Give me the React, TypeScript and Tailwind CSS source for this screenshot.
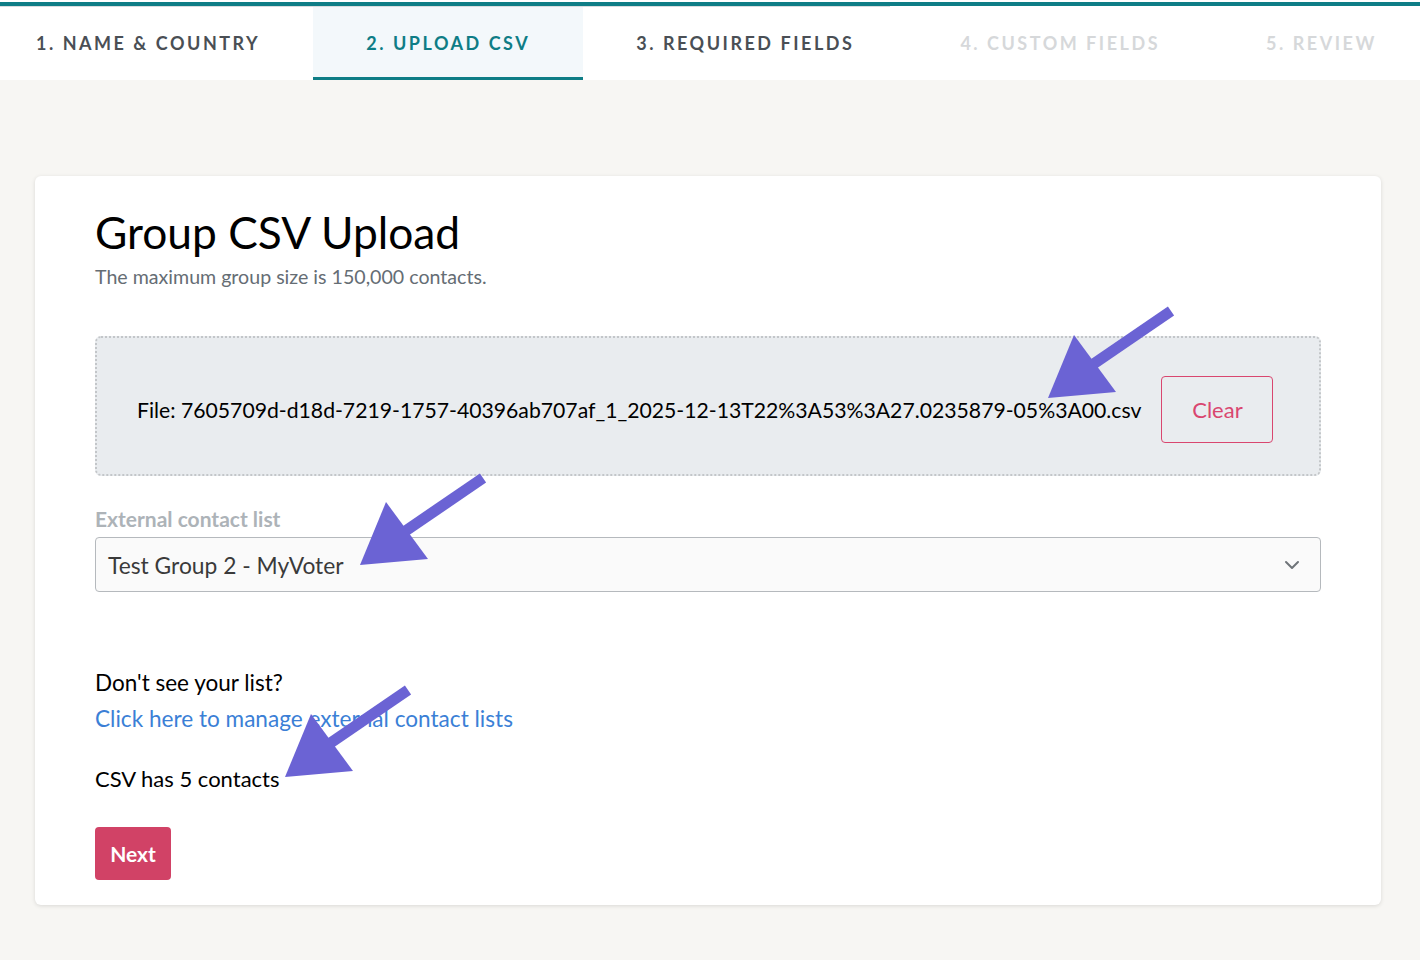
import { ChevronDown } from "lucide-react";

const STEPS = [
  { label: "1. Name & Country", state: "done" },
  { label: "2. Upload CSV", state: "active" },
  { label: "3. Required Fields", state: "done" },
  { label: "4. Custom Fields", state: "todo" },
  { label: "5. Review", state: "todo" },
] as const;

const FILE_NAME =
  "7605709d-d18d-7219-1757-40396ab707af_1_2025-12-13T22%3A53%3A27.0235879-05%3A00.csv";

// tips of the annotation arrows, all the same shape
const ARROW_TIPS = [
  [1048, 398],
  [360, 565],
  [285, 777],
];

function Arrows() {
  return (
    <svg
      className="absolute inset-0 pointer-events-none"
      width={1420}
      height={960}
      viewBox="0 0 1420 960"
    >
      {ARROW_TIPS.map(([x, y], i) => (
        <g key={i} fill="#6b63d4" stroke="#6b63d4">
          <line
            x1={x + 44}
            y1={y - 33}
            x2={x + 123}
            y2={y - 87}
            strokeWidth={11}
          />
          <polygon points={`${x},${y} ${x + 26},${y - 63} ${x + 68},${y - 6}`} strokeWidth={0} />
        </g>
      ))}
    </svg>
  );
}

export default function App() {
  return (
    <div className="relative h-[960px] overflow-hidden bg-[#f7f6f3] font-['Lato',sans-serif]">
      <div className="bg-white pt-[2px]">
        <div className="h-1 bg-[#0e7d86]" />
        <div className="h-px w-[890px] bg-[#d9dcde]" />
        <div className="flex h-[73px] -ml-[17px]">
          {STEPS.map((step) => (
            <div
              key={step.label}
              className={
                "shrink-0 flex items-center px-[53px] text-[18px] font-bold uppercase tracking-[0.14em] " +
                (step.state === "active"
                  ? "bg-[#f3f8fb] text-[#0e7d86] border-b-[3px] border-[#0e7d86] pt-[3px]"
                  : step.state === "done"
                  ? "text-[#4a4f55]"
                  : "text-[#d6d8da]")
              }
            >
              {step.label}
            </div>
          ))}
        </div>
      </div>

      <main className="pl-[35px] pr-[39px] pt-24">
        <div className="bg-white rounded-md shadow-[0_1px_4px_rgba(0,0,0,0.12)] px-[60px] pt-[26px] pb-[25px]">
          <h1 className="text-[44.3px] leading-[60px] text-black">Group CSV Upload</h1>
          <p className="text-[19.6px] text-[#656d74]">
            The maximum group size is 150,000 contacts.
          </p>

          {/* file drop zone */}
          <div className="mt-[45px] h-[140px] rounded-md border-2 border-dotted border-[#c3c6c9] bg-[#e9ecef] flex items-center pl-10 pr-[44px] pt-[6px] gap-5">
            <p className="text-[21.2px] text-black whitespace-nowrap pt-1">File: {FILE_NAME}</p>
            <button className="w-[112px] h-[67px] rounded border border-[#d9466f] text-[22px] text-[#d9466f]">
              Clear
            </button>
          </div>

          <label className="block mt-[31px] text-[21px] font-bold text-[#adb3b8] leading-6">
            External contact list
          </label>
          <div className="mt-[6px] h-[55px] rounded border border-[#b5b9bd] bg-[#fafafa] flex items-center justify-between pl-3 pr-4">
            <span className="text-[22.8px] text-[#3a3a3a]">Test Group 2 - MyVoter</span>
            <ChevronDown className="w-6 h-6 text-[#6f7479]" strokeWidth={2} />
          </div>

          <p className="mt-[73px] text-[22.5px] text-black leading-9">Don't see your list?</p>
          <a className="block text-[22.6px] text-[#3b7fd6] leading-9 cursor-pointer">
            Click here to manage external contact lists
          </a>
          <p className="mt-6 text-[22px] text-black leading-9">CSV has 5 contacts</p>

          <button className="mt-[30px] w-[76px] h-[53px] rounded bg-[#d14266] text-white text-[21px] font-bold">
            Next
          </button>
        </div>
      </main>

      <Arrows />
    </div>
  );
}
